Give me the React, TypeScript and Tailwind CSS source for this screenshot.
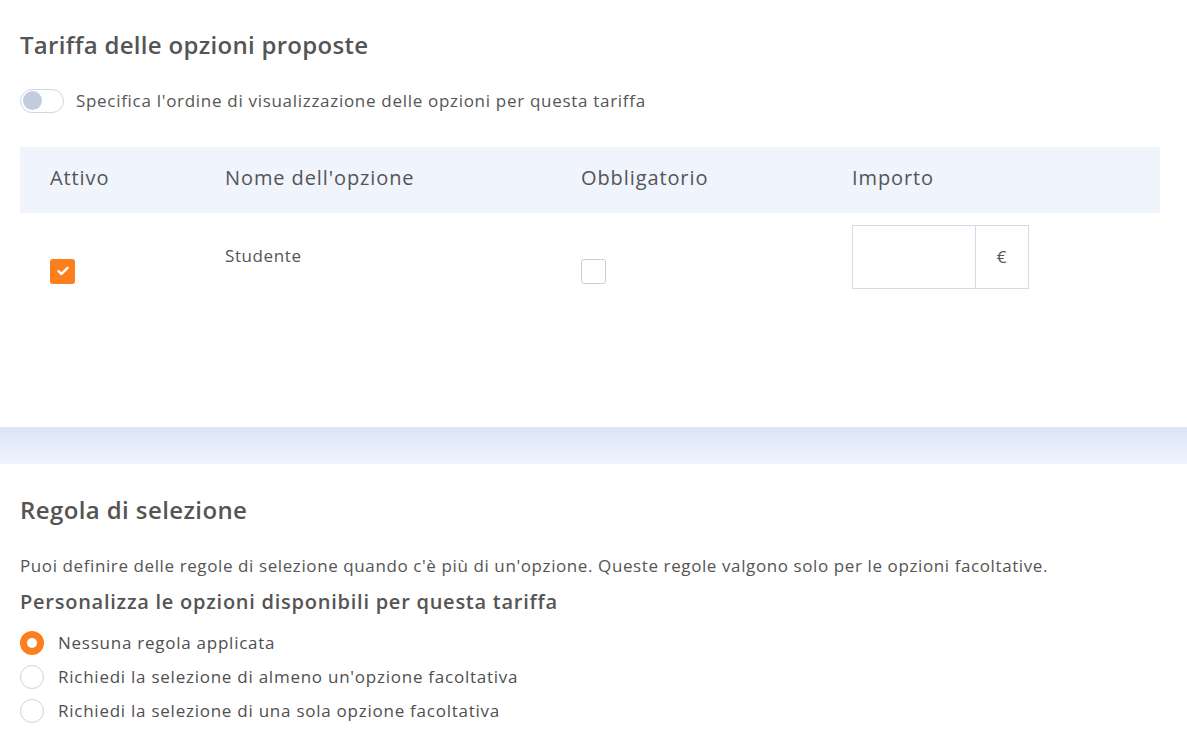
import React from "react";

const font = { fontFamily: "'Open Sans', 'Noto Sans', sans-serif" };

function Radio({ checked, label }: { checked?: boolean; label: string }) {
  return (
    <div className="flex items-center gap-[14px] h-[34px]">
      {checked ? (
        <span className="w-[24px] h-[24px] rounded-full bg-[#fd7e1c] flex items-center justify-center">
          <span className="w-[10px] h-[10px] rounded-full bg-white" />
        </span>
      ) : (
        <span className="w-[24px] h-[24px] rounded-full border border-[#c9d3e3] bg-white" />
      )}
      <span className="text-[17px] text-[#4f4f4f] tracking-[0.75px]">{label}</span>
    </div>
  );
}

export default function App() {
  return (
    <div className="w-[1187px] h-[756px] bg-white overflow-hidden" style={font}>
      <div className="px-[20px] pt-[30px]">
        <h2 className="text-[24px] font-semibold text-[#555] leading-[30px] tracking-[0.3px]">Tariffa delle opzioni proposte</h2>
        <div className="flex items-center gap-[12px] mt-[28px]">
          <span className="w-[44px] h-[24px] rounded-full border border-[#cfd6e2] bg-white flex items-center px-[2px]">
            <span className="w-[19px] h-[19px] rounded-full bg-[#c3ccdc]" />
          </span>
          <span className="text-[17px] text-[#555] tracking-[0.7px]">Specifica l'ordine di visualizzazione delle opzioni per questa tariffa</span>
        </div>
        <div className="mt-[33px] w-[1140px]">
          <div className="grid grid-cols-[175px_356px_271px_1fr] h-[66px] items-center bg-[#eff4fd] pl-[30px] pb-[4px] text-[20px] text-[#555] tracking-[0.9px]">
            <span>Attivo</span>
            <span>Nome dell'opzione</span>
            <span>Obbligatorio</span>
            <span>Importo</span>
          </div>
          <div className="grid grid-cols-[175px_356px_271px_1fr] pl-[30px] pt-[12px] text-[17px] text-[#555] tracking-[0.6px]">
            <div className="pt-[34px]">
              <span className="w-[25px] h-[25px] rounded-[3px] bg-[#fd7e1c] flex items-center justify-center">
                <svg width="12" height="10" viewBox="0 0 12 10">
                  <path d="M1.5 5.2 L4.5 8 L10.5 1.8" stroke="white" strokeWidth="2.4" fill="none" strokeLinecap="round" strokeLinejoin="round" />
                </svg>
              </span>
            </div>
            <div className="pt-[18px]">Studente</div>
            <div className="pt-[34px]">
              <span className="block w-[25px] h-[25px] rounded-[3px] border border-[#c6cfdd] bg-white" />
            </div>
            <div>
              <div className="flex w-[177px] h-[64px] border border-[#d3dbe8]">
                <div className="flex-1 border-r border-[#d3dbe8]" />
                <div className="w-[52px] flex items-center justify-center text-[17px] text-[#555]">€</div>
              </div>
            </div>
          </div>
        </div>
      </div>
      <div className="mt-[138px] h-[37px] bg-gradient-to-b from-[#dbe5f8] to-[#eef3fd]" />
      <div className="px-[20px] pt-[31px]">
        <h2 className="text-[24px] font-semibold text-[#555] leading-[30px] tracking-[0.4px]">Regola di selezione</h2>
        <p className="mt-[28px] text-[17px] text-[#555] tracking-[0.6px]">Puoi definire delle regole di selezione quando c'è più di un'opzione. Queste regole valgono solo per le opzioni facoltative.</p>
        <h3 className="mt-[9px] text-[20px] font-semibold text-[#555] tracking-[0.75px]">Personalizza le opzioni disponibili per questa tariffa</h3>
        <div className="mt-[9px] flex flex-col">
          <Radio checked label="Nessuna regola applicata" />
          <Radio label="Richiedi la selezione di almeno un'opzione facoltativa" />
          <Radio label="Richiedi la selezione di una sola opzione facoltativa" />
        </div>
      </div>
    </div>
  );
}
